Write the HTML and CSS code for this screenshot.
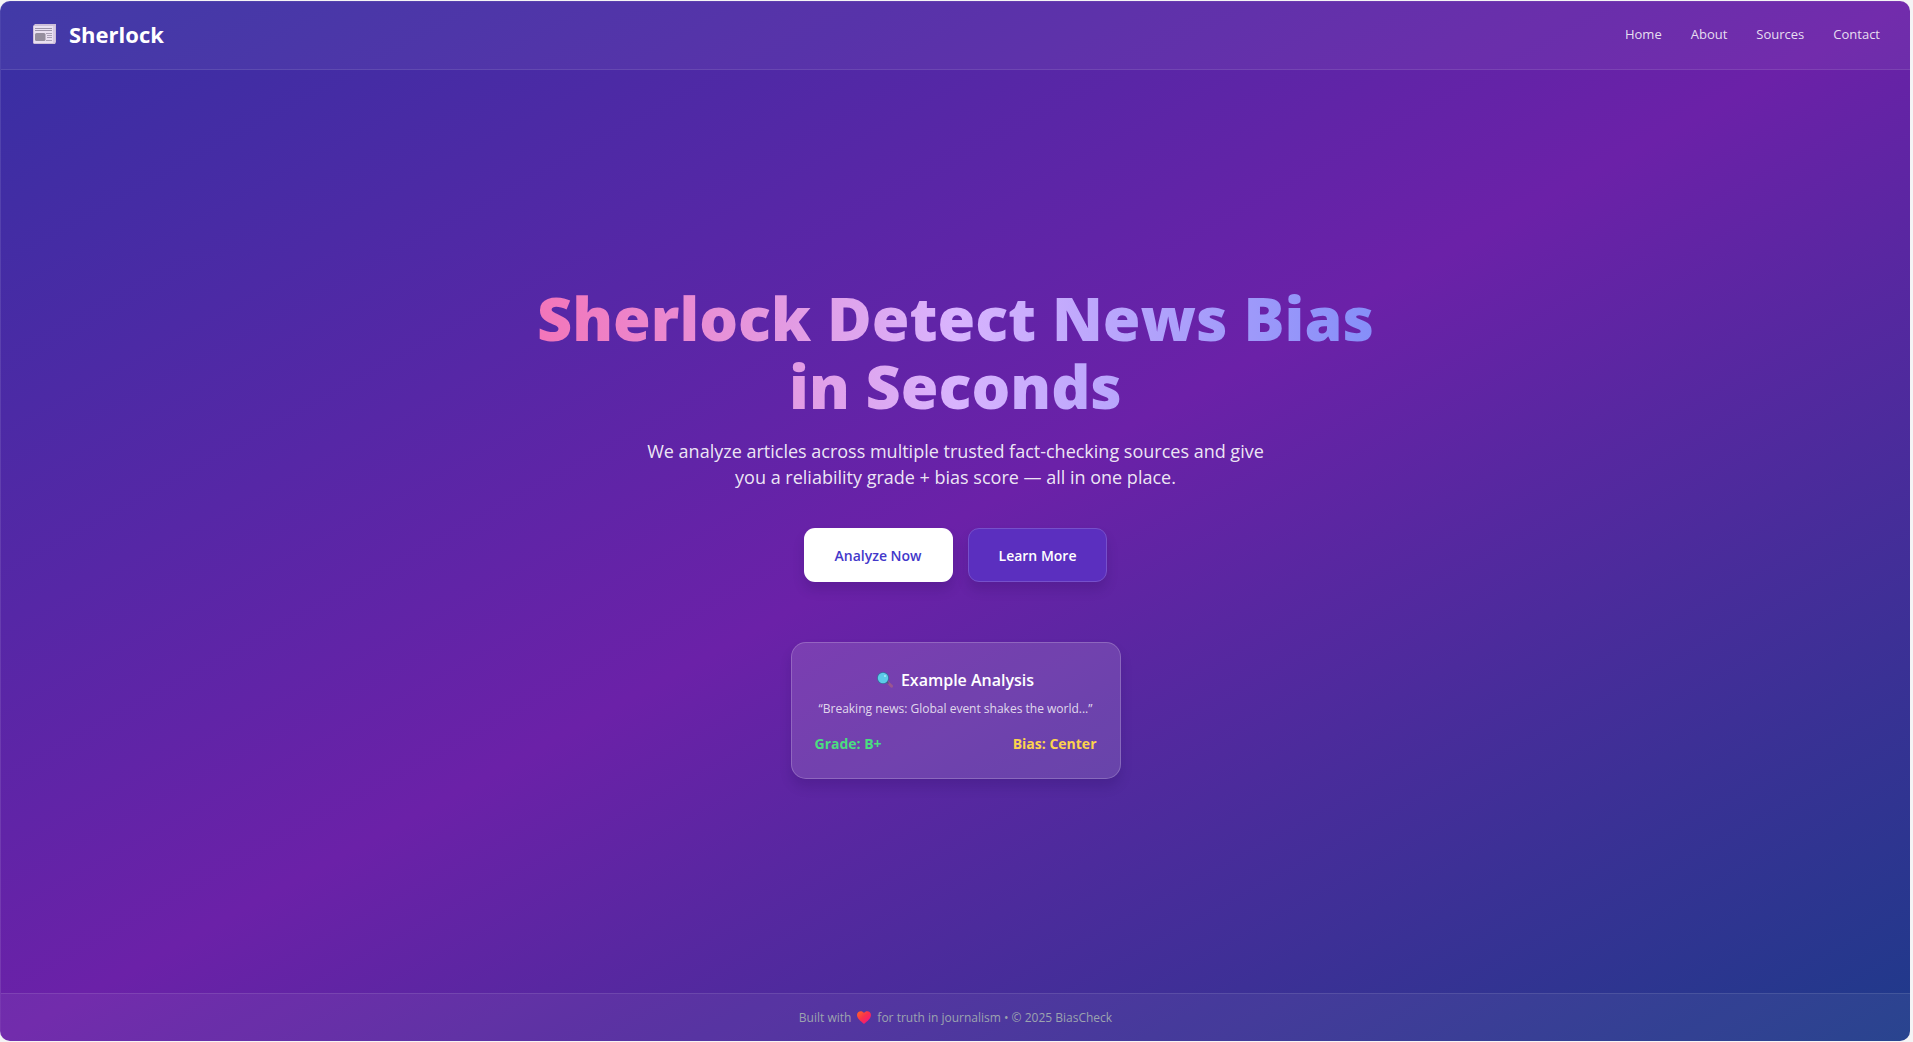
FILE: index.html
```html
<!DOCTYPE html>
<html lang="en">
<head>
<meta charset="utf-8">
<meta name="viewport" content="width=device-width, initial-scale=1">
<title>Sherlock</title>
<link rel="stylesheet" href="styles.css">
</head>
<body>
<div class="app">
  <header class="header">
    <a class="brand" href="#">
      <svg class="brand-icon" viewBox="0 0 24 20" aria-hidden="true">
        <path d="M2 0h21v18l-1 2H1l-1-1V2z" fill="#cdbfd9"/>
        <path d="M1 2h19v17H1z" fill="#e9e0f1"/>
        <path d="M20 2h2v16l-1 1h-1z" fill="#d8cae4"/>
        <path d="M2 4h17v1H2zM2 6h17v1H2z" fill="#9d94aa"/>
        <rect x="2" y="9" width="10.500" height="8" rx="1.500" fill="#958e9e"/>
        <path d="M13 9h6v1h-6zM14 11h5v1h-5zM14 13h5v1h-5zM13 16h6v1h-6z" fill="#aaa0b6"/>
      </svg>
      <span>Sherlock</span>
    </a>
    <nav class="nav">
      <a href="#">Home</a>
      <a href="#">About</a>
      <a href="#">Sources</a>
      <a href="#">Contact</a>
    </nav>
  </header>

  <main class="hero">
    <h1 class="title">Sherlock Detect News Bias in Seconds</h1>
    <p class="lead">We analyze articles across multiple trusted fact-checking sources and give you a reliability grade + bias score — all in one place.</p>
    <div class="actions">
      <button class="btn btn-primary" type="button">Analyze Now</button>
      <button class="btn btn-secondary" type="button">Learn More</button>
    </div>
    <section class="card">
      <h2 class="card-title">
        <svg class="card-icon" viewBox="0 0 16 16" aria-hidden="true">
          <path d="M9 10l1.500-1.500L15.500 13a1.500 1.500 0 0 1-2 2.300z" fill="#9a5590"/>
          <path d="M9 10l1-1 2 2-1 1z" fill="#50527c"/>
          <circle cx="6" cy="6" r="6" fill="#35729c"/>
          <circle cx="6" cy="6" r="5.200" fill="#5ccbe8"/>
          <circle cx="8" cy="4" r="1" fill="#a5ecfa"/>
        </svg>
        <span>Example Analysis</span>
      </h2>
      <p class="quote">“Breaking news: Global event shakes the world...”</p>
      <div class="scores">
        <span class="grade">Grade: B+</span>
        <span class="bias">Bias: Center</span>
      </div>
    </section>
  </main>

  <footer class="footer">
    <span>Built with</span>
    <svg class="heart" viewBox="0 0 14 13" role="img" aria-label="love">
      <defs><linearGradient id="heart-fill" x1="0" y1="0" x2="1" y2="1"><stop offset="0" stop-color="#ff6723"/><stop offset=".45" stop-color="#f8324c"/><stop offset="1" stop-color="#f70a8d"/></linearGradient></defs>
      <path d="M7 2C5-1 0 0 0 4c0 4 5 7 7 9 2-2 7-5 7-9 0-4-5-5-7-2z" fill="url(#heart-fill)"/>
    </svg>
    <span>for truth in journalism • © 2025 BiasCheck</span>
  </footer>
</div>
</body>
</html>
```
FILE: styles.css
```css
* {
  box-sizing: border-box;
}

body {
  margin: 0;
  padding: 1px 3px 0 0;
  background: #f4f4f5;
  font-family: "Open Sans", "Noto Sans", sans-serif;
  color: #fff;
}

h1, h2, p {
  margin: 0;
}

a {
  color: inherit;
  text-decoration: none;
}

.app {
  display: flex;
  flex-direction: column;
  min-height: calc(100vh - 2px);
  border: 1px solid rgba(255, 255, 255, 0.1);
  border-width: 1px 0 0 1px;
  border-radius: 10px;
  background: linear-gradient(to bottom right, #3730a3, #6b21a8, #1e3a8a) border-box;
  overflow: hidden;
}

.header {
  display: flex;
  justify-content: space-between;
  align-items: center;
  height: 68px;
  padding: 0 30px 3px 32px;
  background: rgba(255, 255, 255, 0.05);
  border-bottom: 1px solid rgba(255, 255, 255, 0.1);
}

.brand {
  display: flex;
  align-items: center;
  gap: 12px;
  font-size: 22px;
  font-weight: 700;
}

.brand-icon {
  width: 24px;
  height: 20px;
}

.nav {
  display: flex;
  gap: 29px;
  font-size: 13px;
  font-weight: 500;
  color: rgba(255, 255, 255, 0.85);
}

.hero {
  flex: 1;
  display: flex;
  flex-direction: column;
  align-items: center;
  justify-content: center;
  padding: 0 24px;
  text-align: center;
}

.title {
  max-width: 880px;
  font-size: 61px;
  font-weight: 800;
  line-height: 68px;
  color: transparent;
  background: linear-gradient(to right, #f472b6, #d8b4fe, #818cf8);
  background-clip: text;
  -webkit-background-clip: text;
}

.lead {
  max-width: 640px;
  margin-top: 18px;
  font-size: 18px;
  line-height: 26px;
  color: rgba(255, 255, 255, 0.9);
}

.actions {
  display: flex;
  gap: 15px;
  margin-top: 38px;
}

.btn {
  height: 54px;
  padding: 0 30px;
  border: 1px solid transparent;
  border-radius: 11px;
  font: 600 14px "Open Sans", "Noto Sans", sans-serif;
  box-shadow: 0 8px 12px rgba(20, 10, 70, 0.15);
}

.btn-primary {
  background: #fff;
  color: #4338ca;
}

.btn-secondary {
  background: #5b2fbf;
  border-color: #7650cb;
  color: #fff;
}

.card {
  width: 330px;
  margin-top: 60px;
  padding: 23px;
  border: 1px solid rgba(255, 255, 255, 0.2);
  border-radius: 15px;
  background: rgba(255, 255, 255, 0.13);
  box-shadow: 0 8px 12px rgba(20, 10, 70, 0.15);
}

.card-title {
  display: flex;
  justify-content: center;
  align-items: center;
  gap: 8px;
  font-size: 16px;
  font-weight: 600;
  line-height: 28px;
}

.card-icon {
  width: 16px;
  height: 16px;
}

.quote {
  margin-top: 5px;
  font-size: 12px;
  line-height: 20px;
  white-space: nowrap;
  color: rgba(255, 255, 255, 0.8);
}

.scores {
  display: flex;
  justify-content: space-between;
  margin-top: 13px;
  font-size: 14px;
  font-weight: 700;
  line-height: 23px;
}

.grade {
  color: #4ade80;
}

.bias {
  color: #fcd34d;
}

.footer {
  display: flex;
  justify-content: center;
  align-items: center;
  gap: 6px;
  height: 48px;
  background: rgba(255, 255, 255, 0.05);
  border-top: 1px solid rgba(255, 255, 255, 0.1);
  font-size: 12px;
  color: #9ca3af;
}

.heart {
  width: 14px;
  height: 13px;
}
```
